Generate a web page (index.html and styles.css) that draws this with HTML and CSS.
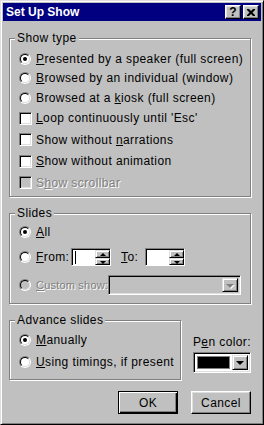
FILE: index.html
```html
<!DOCTYPE html>
<html lang="en">
<head>
  <meta charset="UTF-8" />
  <title>Set Up Show</title>
  <link rel="stylesheet" href="styles.css">
</head>
<body>
  <div class="window">
    <div class="titlebar">
      <span class="title">Set Up Show</span>
      <div class="title-buttons">
        <span class="tbtn help">?</span>
        <span class="tbtn close">
          <svg width="8" height="7" viewBox="0 0 8 7"><path d="M0 0h2l2 2 2-2h2v1l-2.5 2.5L8 6v1H6L4 5 2 7H0V6l2.5-2.5L0 1z" fill="#000"/></svg>
        </span>
      </div>
    </div>

    <div class="dialog">
      <fieldset class="group show-type">
        <legend>Show type</legend>
        <div class="opt"><span class="radio checked"></span><span><u>P</u>resented by a speaker (full screen)</span></div>
        <div class="opt"><span class="radio"></span><span><u>B</u>rowsed by an individual (window)</span></div>
        <div class="opt"><span class="radio"></span><span>Browsed at a <u>k</u>iosk (full screen)</span></div>
        <div class="opt tall"><span class="check"></span><span><u>L</u>oop continuously until 'Esc'</span></div>
        <div class="opt tall"><span class="check"></span><span>Show without <u>n</u>arrations</span></div>
        <div class="opt tall"><span class="check"></span><span><u>S</u>how without animation</span></div>
        <div class="opt tall disabled"><span class="check"></span><span>S<u>h</u>ow scrollbar</span></div>
      </fieldset>

      <fieldset class="group slides">
        <legend>Slides</legend>
        <div class="opt"><span class="radio checked"></span><span><u>A</u>ll</span></div>
        <div class="opt range">
          <span class="radio"></span>
          <span class="from-label"><u>F</u>rom:</span>
          <div class="spin">
            <div class="edit"><span class="caret"></span></div>
            <div class="updown">
              <span class="ud up"></span>
              <span class="ud down"></span>
            </div>
          </div>
          <span class="to-label"><u>T</u>o:</span>
          <div class="spin">
            <div class="edit"></div>
            <div class="updown">
              <span class="ud up"></span>
              <span class="ud down"></span>
            </div>
          </div>
        </div>
        <div class="opt custom disabled">
          <span class="radio"></span>
          <span class="custom-label"><u>C</u>ustom show:</span>
          <div class="combo custom-combo">
            <div class="combo-field"></div>
            <span class="drop"><span class="arrow"></span></span>
          </div>
        </div>
      </fieldset>

      <div class="bottom-row">
        <fieldset class="group advance">
          <legend>Advance slides</legend>
          <div class="opt"><span class="radio checked"></span><span><u>M</u>anually</span></div>
          <div class="opt second"><span class="radio"></span><span><u>U</u>sing timings, if present</span></div>
        </fieldset>
        <div class="pen">
          <span class="pen-label">P<u>e</u>n color:</span>
          <div class="combo pen-combo">
            <div class="combo-field"><span class="swatch"></span></div>
            <span class="drop"><span class="arrow"></span></span>
          </div>
        </div>
      </div>

      <div class="buttons">
        <button class="btn default">OK</button>
        <button class="btn">Cancel</button>
      </div>
    </div>
  </div>
</body>
</html>
```

FILE: styles.css
```css
body {
  margin: 0;
  font-family: "Liberation Sans", Arial, sans-serif;
  font-size: 12px;
  letter-spacing: 0.4px;
  color: #000;
  background: #c0c0c0;
}

u {
  text-decoration: underline;
  text-underline-offset: 1px;
}

.window {
  width: 264px;
  height: 425px;
  box-sizing: border-box;
  background: #c0c0c0;
  border: 1px solid;
  border-color: #dfdfdf #000 #000 #dfdfdf;
  box-shadow: inset 1px 1px #fff, inset -1px -1px #808080;
  padding: 2px;
}

/* title bar */
.titlebar {
  height: 18px;
  background: #000080;
  color: #fff;
  display: flex;
  align-items: center;
  padding: 0 2px 0 3px;
}

.title {
  font-weight: bold;
  font-size: 12px;
  letter-spacing: 0;
  flex: 1;
}

.title-buttons {
  display: flex;
  gap: 2px;
}

.tbtn {
  width: 16px;
  height: 14px;
  box-sizing: border-box;
  background: #c0c0c0;
  border: 1px solid;
  border-color: #fff #000 #000 #fff;
  box-shadow: inset -1px -1px #808080, inset 1px 1px #dfdfdf;
  display: flex;
  align-items: center;
  justify-content: center;
  color: #000;
  font-weight: bold;
  font-size: 12px;
  letter-spacing: 0;
  line-height: 12px;
}

.tbtn svg {
  display: block;
}

/* dialog body */
.dialog {
  padding: 10px 10px 0 6px;
}

.group {
  margin: 0;
  padding: 0;
  border: 1px solid #808080;
  box-shadow: inset 1px 1px #fff, 1px 1px #fff;
  min-width: 0;
}

.group legend {
  margin-left: 5px;
  padding: 0 2px;
  background: #c0c0c0;
  line-height: 14px;
}

.show-type {
  padding: 4px 0 2.5px;
}

.slides {
  margin-top: 9px;
  padding: 2px 0 7px;
}

.opt {
  display: flex;
  align-items: center;
  height: 19.5px;
  margin: 0 9px;
  white-space: nowrap;
}

.opt.tall {
  height: 21.5px;
}

.disabled {
  color: #808080;
}

.disabled > span:not(.radio):not(.check) {
  text-shadow: 1px 1px #fff;
}

/* radio buttons */
.radio {
  position: relative;
  width: 12px;
  height: 12px;
  box-sizing: border-box;
  border-radius: 50%;
  border: 1px solid;
  border-color: #808080 #fff #fff #808080;
  margin-right: 5px;
  flex: none;
}

.radio::before {
  content: "";
  display: block;
  width: 10px;
  height: 10px;
  box-sizing: border-box;
  border-radius: 50%;
  border: 1px solid;
  border-color: #000 #dfdfdf #dfdfdf #000;
  background: #fff;
}

.disabled .radio::before {
  background: #c0c0c0;
}

.radio.checked::after {
  content: "";
  position: absolute;
  left: 3px;
  top: 3px;
  width: 4px;
  height: 4px;
  border-radius: 50%;
  background: #000;
}

/* checkboxes */
.check {
  width: 13px;
  height: 13px;
  box-sizing: border-box;
  border: 1px solid;
  border-color: #808080 #fff #fff #808080;
  box-shadow: inset 1px 1px #000, inset -1px -1px #dfdfdf;
  background: #fff;
  margin-right: 4px;
  flex: none;
}

.disabled .check {
  background: #c0c0c0;
}

/* slide range */
.slides .opt {
  height: 20px;
}

.slides .range {
  height: 22px;
  margin-top: 4px;
}

.from-label {
  width: 35px;
}

.to-label {
  width: 24px;
  margin-left: 10px;
}

.spin {
  display: flex;
  height: 18px;
  box-sizing: border-box;
  border: 1px solid;
  border-color: #808080 #fff #fff #808080;
  box-shadow: inset 1px 1px #000;
  background: #fff;
  padding: 1px 0 0 1px;
}

.edit {
  width: 22px;
  box-sizing: border-box;
  display: flex;
  align-items: center;
  padding-left: 2px;
}

.caret {
  width: 1px;
  height: 13px;
  background: #000;
}

.updown {
  display: flex;
  flex-direction: column;
  width: 15px;
}

.ud {
  position: relative;
  flex: 1;
  box-sizing: border-box;
  background: #c0c0c0;
  border: 1px solid;
  border-color: #dfdfdf #000 #000 #dfdfdf;
  box-shadow: inset 1px 1px #fff, inset -1px -1px #808080;
}

.ud::after {
  content: "";
  position: absolute;
  left: 4px;
  border-left: 3px solid transparent;
  border-right: 3px solid transparent;
}

.ud.up::after {
  top: 2px;
  border-bottom: 3px solid #000;
}

.ud.down::after {
  top: 2px;
  border-top: 3px solid #000;
}

/* combo boxes */
.slides .custom {
  height: 22px;
  margin-top: 6px;
}

.custom-label {
  font-size: 11px;
  letter-spacing: 0.2px;
}

.combo {
  display: flex;
  box-sizing: border-box;
  border: 1px solid;
  border-color: #808080 #fff #fff #808080;
  box-shadow: inset 1px 1px #000, inset -1px -1px #dfdfdf;
  padding: 2px;
}

.combo-field {
  flex: 1;
}

.custom-combo {
  margin-left: auto;
  width: 134px;
  height: 20px;
  background: #c0c0c0;
}

.drop {
  position: relative;
  width: 16px;
  box-sizing: border-box;
  background: #c0c0c0;
  border: 1px solid;
  border-color: #dfdfdf #000 #000 #dfdfdf;
  box-shadow: inset 1px 1px #fff, inset -1px -1px #808080;
}

.arrow {
  position: absolute;
  left: 3px;
  top: 5px;
  border-left: 4px solid transparent;
  border-right: 4px solid transparent;
  border-top: 4px solid #000;
}

.disabled .arrow {
  border-top-color: #808080;
  filter: drop-shadow(1px 1px 0 #fff);
}

/* advance slides + pen colour */
.bottom-row {
  display: flex;
  margin-top: 9px;
}

.advance {
  width: 170px;
  padding: 3px 0 7px;
}

.advance .opt {
  height: 20px;
}

.advance .second {
  margin-top: 2px;
}

.pen {
  margin-left: auto;
  display: flex;
  flex-direction: column;
  padding-top: 22px;
}

.pen-label {
  line-height: 15px;
  margin-bottom: 2px;
}

.pen-combo {
  width: 58px;
  height: 21px;
  background: #fff;
}

.pen-combo .combo-field {
  display: flex;
  padding: 1px 2px 1px 1px;
}

.swatch {
  flex: 1;
  background: #000;
  border: 1px solid #808080;
}

/* buttons */
.buttons {
  display: flex;
  justify-content: flex-end;
  gap: 13px;
  margin-top: 11px;
}

.btn {
  width: 60px;
  height: 23px;
  box-sizing: border-box;
  font-family: "Liberation Sans", Arial, sans-serif;
  font-size: 12px;
  letter-spacing: 0.4px;
  color: #000;
  background: #c0c0c0;
  border: 1px solid;
  border-color: #fff #000 #000 #fff;
  box-shadow: inset -1px -1px #808080, inset 1px 1px #dfdfdf;
  padding: 0;
}

.btn.default {
  border-color: #000;
  box-shadow: inset 1px 1px #fff, inset -1px -1px #000, inset -2px -2px #808080;
}
```
